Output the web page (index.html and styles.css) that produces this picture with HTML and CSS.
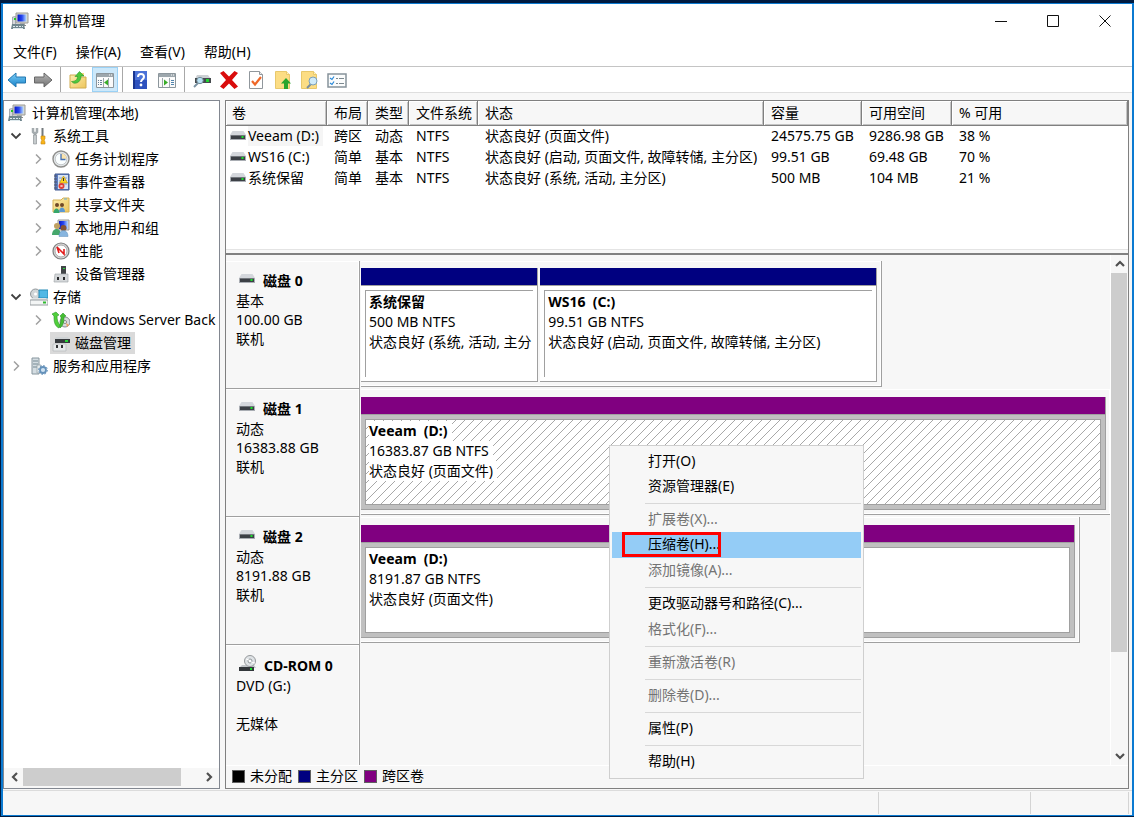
FILE: index.html
```html
<!DOCTYPE html>
<html lang="zh-CN">
<head>
<meta charset="utf-8">
<title>计算机管理</title>
<link rel="stylesheet" href="styles.css">
</head>
<body>
<svg class="defs" aria-hidden="true">
  <defs>
    <linearGradient id="gBlue" x1="0" y1="0" x2="0" y2="1"><stop offset="0" stop-color="#7fd0f8"/><stop offset="1" stop-color="#1480c8"/></linearGradient>
    <linearGradient id="gGray" x1="0" y1="0" x2="0" y2="1"><stop offset="0" stop-color="#b8b8b8"/><stop offset="1" stop-color="#707070"/></linearGradient>
    <linearGradient id="gFold" x1="0" y1="0" x2="1" y2="1"><stop offset="0" stop-color="#fdeeb0"/><stop offset="1" stop-color="#edc65c"/></linearGradient>
    <linearGradient id="gScreen" x1="0" y1="0" x2="1" y2="0"><stop offset="0" stop-color="#0818c8"/><stop offset=".5" stop-color="#2848f0"/><stop offset="1" stop-color="#b8dcff"/></linearGradient>
  </defs>
  <symbol id="computer" viewBox="0 0 18 18">
    <path d="M5 1h12v10H5z" fill="#d8d8cc" stroke="#9a9a98"/><path d="M6.500 2.500h9v7h-9z" fill="url(#gScreen)"/>
    <path d="M9 11h5v2H9z" fill="#aaa"/><path d="M7 13h8v1H7z" fill="#888"/>
    <path d="M1.500 5l3-.5v8h-3z" fill="#d4d8dc" stroke="#8a9096" stroke-width=".7"/><path d="M3 6h2v2H3z" fill="#28c428"/>
    <path d="M1 12h12l1 5H0z" fill="#6f868e"/><path d="M2 14h2v1H2zM5 14h2v1H5zM8 14h2v1H8zM11 14h1v1h-1zM2 16h10v1H2z" fill="#dfeaee"/>
  </symbol>
  <symbol id="disk" viewBox="0 0 16 10">
    <path d="M2.500 0h11L16 4H0z" fill="#d4d7dc"/><path d="M0 4h16v5H0z" fill="#a9adb3"/><path d="M1 4.500h14v3.500H1z" fill="#3c4046"/><path d="M11.500 5h2v2h-2z" fill="#19e02a"/>
  </symbol>
  <symbol id="cdrom" viewBox="0 0 17 17">
    <path d="M3 10h12l2 3H0z" fill="#c2c6ca"/><circle cx="11" cy="6" r="5.500" fill="#dfe3e6" stroke="#96999c"/><circle cx="11" cy="6" r="2" fill="#fff" stroke="#8e9498"/>
    <path d="M7 4l3 1M12 7l4 1" stroke="#fff"/><path d="M0 12h15v4H0z" fill="#33373b"/><path d="M11 13h2v2h-2z" fill="#20df30"/>
  </symbol>
  <symbol id="down" viewBox="0 0 12 12"><path d="M1.500 3.500L6 8l4.500-4.500" fill="none" stroke="#404040" stroke-width="1.800"/></symbol>
  <symbol id="right" viewBox="0 0 12 12"><path d="M4 1.500L8.500 6 4 10.500" fill="none" stroke="#a0a0a0" stroke-width="1.500"/></symbol>
  <symbol id="arrow" viewBox="0 0 12 12"><path d="M2 8l4-4 4 4" fill="none" stroke="#505050" stroke-width="2.200"/></symbol>
</svg>
<div class="window">
  <header class="titlebar">
    <svg class="icon"><use href="#computer"/></svg>
    <h1>计算机管理</h1>
    <div class="controls">
      <button aria-label="最小化"><svg class="ctl" viewBox="0 0 12 12"><path d="M0 6.500h12"/></svg></button>
      <button aria-label="最大化"><svg class="ctl" viewBox="0 0 12 12"><path d="M.5.5h11v11H.5z"/></svg></button>
      <button aria-label="关闭"><svg class="ctl" viewBox="0 0 12 12"><path d="M.5.5l11 11M11.500.5l-11 11"/></svg></button>
    </div>
  </header>
  <nav class="menubar">
    <button>文件(F)</button><button>操作(A)</button><button>查看(V)</button><button>帮助(H)</button>
  </nav>
  <div class="toolbar">
    <div class="group tight">
      <button aria-label="后退"><svg class="tool" viewBox="0 0 20 20"><path d="M1 10l8-7v4h9.500v6H9v4z" fill="url(#gBlue)" stroke="#2277b0"/></svg></button>
      <button aria-label="前进"><svg class="tool" viewBox="0 0 20 20"><path d="M19 10l-8-7v4H1.500v6H11v4z" fill="url(#gGray)" stroke="#666"/></svg></button>
    </div>
    <div class="group">
      <button aria-label="上一级"><svg class="tool" viewBox="0 0 20 20"><path d="M2 5h6l2 2h8v11H2z" fill="url(#gFold)" stroke="#d0ac50"/><path d="M12 3h4v3h-4z" fill="#f4d880"/><path d="M3.500 11.500c4 0 6-2 6-5H7l4.500-5L16 6h-3c0 5-3.500 8-7.500 7z" fill="#4ec83c" stroke="#28962a" stroke-width=".6"/></svg></button>
      <button class="on" aria-label="控制台树"><svg class="tool" viewBox="0 0 20 20"><path d="M1.500 3.500h17v14h-17z" fill="#fafafa" stroke="#8c969c"/><path d="M2 4h16v3H2z" fill="#9da7ad"/><path d="M14 5h1M16 5h1M2 8.500h16" stroke="#fff"/><path d="M8.500 8v9M13.500 8v9" stroke="#9da7ad"/><path d="M3 10.500h4M3 12.500h4M3 14.500h4" stroke="#668298" stroke-dasharray="1 1 2"/><path d="M13 9.500v6l-4-3z" fill="#38ac28"/></svg></button>
    </div>
    <div class="group">
      <button aria-label="帮助"><svg class="tool" viewBox="0 0 20 20"><path d="M3 1h14v18H3z" fill="#2e52be"/><path d="M3 1h2v18H3z" fill="#193590"/><path d="M5 1h12v9H5z" fill="#4b72d8"/><path d="M8 7c0-4 6-4 6 0 0 2-3 2.500-3 5" fill="none" stroke="#fff" stroke-width="2"/><circle cx="11" cy="15" r="1.400" fill="#fff"/></svg></button>
      <button aria-label="操作窗格"><svg class="tool" viewBox="0 0 20 20"><path d="M1.500 3.500h17v14h-17z" fill="#fafafa" stroke="#8c969c"/><path d="M2 4h16v3H2z" fill="#9da7ad"/><path d="M14 5h1M16 5h1M2 8.500h16" stroke="#fff"/><path d="M5.500 8v9M12.500 8v9" stroke="#9da7ad"/><path d="M14 10.500h3M14 12.500h3M14 14.500h3" stroke="#5285ad"/><path d="M7 9.500v6l4-3z" fill="#38ac28"/></svg></button>
    </div>
    <div class="group">
      <button aria-label="刷新磁盘"><svg class="tool" viewBox="0 0 20 20"><path d="M5 5h11l3 4H3z" fill="#ccd0d4"/><path d="M3 8h16v5H3z" fill="#454b4e"/><path d="M14 9h3v3h-3z" fill="#20d62e"/><path d="M2 17l5-5" stroke="#7c94a4" stroke-width="2"/><circle cx="8" cy="10.500" r="3.200" fill="#b9e2f5" stroke="#758c98"/></svg></button>
      <button aria-label="删除"><svg class="tool" viewBox="0 0 20 20"><path d="M1 3l3.500-2L10 6.500 15.500 1 19 3l-6 7 6 6.500-3.500 2.500L10 13.500 4.500 19 1 16.500 7 10z" fill="#d90c0c"/></svg></button>
      <button aria-label="属性"><svg class="tool" viewBox="0 0 20 20"><path d="M3.500 1.500h10l3 3v14h-13z" fill="#fff" stroke="#90979c"/><path d="M13.500 1.500v3h3" fill="#eee" stroke="#90979c"/><path d="M6 11l3 3.500L15 7" fill="none" stroke="#ef6829" stroke-width="2.200"/></svg></button>
      <button aria-label="新建"><svg class="tool" viewBox="0 0 20 20"><path d="M2.500 1.500h11l3 3v14h-14z" fill="#fcdd84" stroke="#e8c86c"/><path d="M13.500 1.500v3h3" fill="#fff3c2" stroke="#e8c86c"/><path d="M13 8l5 5.500h-3V19h-4v-5.500H8z" fill="#2aa52c"/></svg></button>
      <button aria-label="查找"><svg class="tool" viewBox="0 0 20 20"><path d="M1.500 1.500h12l3 3v14h-15z" fill="#fcdd84" stroke="#e8c86c"/><path d="M13.500 1.500v3h3" fill="#fff3c2" stroke="#e8c86c"/><path d="M7 18l4-4" stroke="#7a8c9c" stroke-width="2"/><circle cx="13" cy="11" r="4" fill="#cfeaf9" stroke="#7ca0b8"/></svg></button>
      <button aria-label="列表"><svg class="tool" viewBox="0 0 20 20"><path d="M1 4h18v13H1z" fill="#fbfcfc" stroke="#87929a" stroke-width="1.500"/><path d="M3 8l2 1.500L7 6.500M3 13l2 1.500L7 11.500" fill="none" stroke="#2486d8" stroke-width="1.200"/><path d="M9 8.500h2M12 8.500h5M9 13.500h2M12 13.500h5" stroke="#7c8990"/></svg></button>
    </div>
  </div>
  <main class="main">
    <aside class="side">
      <ul class="tree">
        <li class="row root"><svg class="icon"><use href="#computer"/></svg><span class="name">计算机管理(本地)</span></li>
        <li class="row"><button class="twist" aria-label="折叠"><svg class="chev"><use href="#down"/></svg></button>
          <svg class="icon" viewBox="0 0 18 18"><path d="M3 1v4l2 2 2-2V1M5 7v10" fill="none" stroke="#a4abae" stroke-width="2.500"/><path d="M3.500 8h3v9h-3z" fill="#c6cbcd" stroke="#888f92" stroke-width=".6"/><path d="M12.500 1v9" stroke="#73797c" stroke-width="2"/><path d="M11 9h4v3l-1 1 1 2v2h-4v-2l1-2-1-1z" fill="#f8b419" stroke="#c88610" stroke-width=".6"/></svg><span class="name">系统工具</span></li>
        <li class="row sub"><button class="twist" aria-label="展开"><svg class="chev"><use href="#right"/></svg></button>
          <svg class="icon" viewBox="0 0 18 18"><circle cx="9" cy="9" r="8" fill="#e6eaec" stroke="#8e8e8c" stroke-width="1.400"/><circle cx="9" cy="9" r="5.800" fill="#fafeff" stroke="#c4c8ca"/><path d="M9 9V3.500A5.500 5.500 0 0 1 14.500 9z" fill="#fae3ac"/><path d="M9 4v5.500h4.500" fill="none" stroke="#4570b4" stroke-width="1.300"/></svg><span class="name">任务计划程序</span></li>
        <li class="row sub"><button class="twist" aria-label="展开"><svg class="chev"><use href="#right"/></svg></button>
          <svg class="icon" viewBox="0 0 18 18"><path d="M3 1h14v16H3z" fill="#5d7ec2" stroke="#40588f"/><path d="M6 2h10v14H6z" fill="#d7e3f5"/><path d="M7 5h8M7 8h8M7 11h8" stroke="#91a4c4"/><path d="M2 3h3M2 6h3M2 9h3M2 12h3M2 15h3" stroke="#4f5568"/><path d="M11.500 3l4 7h-8z" fill="#ffd321" stroke="#bc930c" stroke-width=".6"/><path d="M11.500 5v3" stroke="#333"/><circle cx="9.500" cy="13" r="3" fill="#e24036"/><path d="M8.500 12l2 2m0-2l-2 2" stroke="#fff" stroke-width=".8"/></svg><span class="name">事件查看器</span></li>
        <li class="row sub"><button class="twist" aria-label="展开"><svg class="chev"><use href="#right"/></svg></button>
          <svg class="icon" viewBox="0 0 18 18"><path d="M1 4h8l2-2h6v14H1z" fill="url(#gFold)" stroke="#d6b256"/><path d="M12 3h3" stroke="#60acdb"/><circle cx="5" cy="9" r="2" fill="#714927"/><circle cx="10" cy="9" r="2" fill="#714927"/><path d="M1.500 17c0-6 6-6 6 0z" fill="#36a66c"/><path d="M7 16c0-6 6-6 6 0z" fill="#5b98d2"/></svg><span class="name">共享文件夹</span></li>
        <li class="row sub"><button class="twist" aria-label="展开"><svg class="chev"><use href="#right"/></svg></button>
          <svg class="icon" viewBox="0 0 18 18"><path d="M6 1h11v10H6z" fill="#d9dcd6" stroke="#999"/><path d="M7 2h9v8H7z" fill="url(#gScreen)"/><circle cx="5" cy="7" r="3" fill="#c0a061"/><path d="M0 16c0-8 9-8 9 0z" fill="#45a76c"/><circle cx="11.500" cy="9" r="3" fill="#855434"/><path d="M7 17.500c0-8 9-8 9 0z" fill="#87b5df" stroke="#6290bb" stroke-width=".5"/></svg><span class="name">本地用户和组</span></li>
        <li class="row sub"><button class="twist" aria-label="展开"><svg class="chev"><use href="#right"/></svg></button>
          <svg class="icon" viewBox="0 0 18 18"><circle cx="9" cy="9" r="8" fill="#d9d9d9" stroke="#7e7e7e" stroke-width="1.200"/><circle cx="9" cy="9" r="6" fill="#fff" stroke="#aaa"/><path d="M5 5l7 7V7M5 5l2 6" fill="none" stroke="#e21b1b" stroke-width="1.600"/></svg><span class="name">性能</span></li>
        <li class="row sub"><span class="twist"></span>
          <svg class="icon" viewBox="0 0 18 18"><path d="M9 1h5v9H9z" fill="#414447"/><path d="M11 3h2v1h-2z" fill="#2bd63a"/><path d="M3 9h13v8H2z" fill="#d5d8da" stroke="#a5a9ac" stroke-width=".7"/><path d="M5 12h2v3H5zM11 12h2v3h-2z" fill="#292b2d"/></svg><span class="name">设备管理器</span></li>
        <li class="row"><button class="twist" aria-label="折叠"><svg class="chev"><use href="#down"/></svg></button>
          <svg class="icon" viewBox="0 0 18 18"><circle cx="5.500" cy="6" r="5" fill="#d1d6d8" stroke="#91979a"/><circle cx="5.500" cy="6" r="1.500" fill="#fff"/><path d="M9 2h9v8H9z" fill="#51b8e5" stroke="#248bb7"/><path d="M2 10h14l2 3H0z" fill="#dfe3e5"/><path d="M0 12h18v5H0z" fill="#f3f5f5" stroke="#989ea1"/><path d="M13 13.500h3v2h-3z" fill="#30ba31"/></svg><span class="name">存储</span></li>
        <li class="row sub"><button class="twist" aria-label="展开"><svg class="chev"><use href="#right"/></svg></button>
          <svg class="icon" viewBox="0 0 18 18"><circle cx="13" cy="11" r="5" fill="#d9dadd" stroke="#898c90"/><circle cx="13" cy="11" r="1.500" fill="#fff" stroke="#888"/><path d="M14 12l3 2-2 2z" fill="#f1a05b"/><path d="M0 3l4-2 3 3-2 1c0 4 1 7 3 9l-1 3C2 15 2 9 2 5z" fill="#51cf3b" stroke="#2b962b" stroke-width=".6"/><path d="M8 5l3-3 3 3-2 1c0 5-1 9-4 11-1-2 1-4 1-11z" fill="#45bd32" stroke="#2b962b" stroke-width=".6"/></svg><span class="name">Windows Server Back</span></li>
        <li class="row sub"><span class="twist"></span><span class="picked">
          <svg class="icon" viewBox="0 0 18 18"><path d="M4 3h12l2 2H2z" fill="#cfd3d5"/><path d="M3 5h15v4H3z" fill="#363a3d"/><path d="M13 6h3v2h-3z" fill="#29d338"/><path d="M1 10h13v7H1z" fill="#e6e8e9" stroke="#b0b4b7" stroke-width=".6"/><path d="M4 11h2v3H4zM9 11h2v3H9z" fill="#303234"/></svg><span class="name">磁盘管理</span></span></li>
        <li class="row"><button class="twist" aria-label="展开"><svg class="chev"><use href="#right"/></svg></button>
          <svg class="icon" viewBox="0 0 18 18"><path d="M2 1h7v16H2z" fill="#d4dde2" stroke="#87969e"/><path d="M3 4h5M3 7h5M3 10h5" stroke="#758993"/><path d="M7 8h4v8H7z" fill="#e4eaec" stroke="#97a1a7" stroke-width=".7"/><circle cx="13" cy="13" r="3" fill="#cfe2f2" stroke="#6491ba" stroke-width="1.800"/><circle cx="13" cy="13" r="4.400" fill="none" stroke="#6491ba" stroke-dasharray="1.700 1.700"/></svg><span class="name">服务和应用程序</span></li>
      </ul>
      <div class="hscroll">
        <button aria-label="向左"><svg class="chev left"><use href="#arrow"/></svg></button>
        <div class="track"><div class="thumb"></div></div>
        <button aria-label="向右"><svg class="chev toright"><use href="#arrow"/></svg></button>
      </div>
    </aside>
    <section class="content">
      <div class="volumes">
        <table>
          <colgroup><col class="c-name"><col class="c-kind"><col class="c-kind"><col class="c-fs"><col class="c-state"><col class="c-cap"><col class="c-free"><col></colgroup>
          <thead><tr><th>卷</th><th>布局</th><th>类型</th><th>文件系统</th><th>状态</th><th>容量</th><th>可用空间</th><th>% 可用</th></tr></thead>
          <tbody>
            <tr><td><svg class="drive"><use href="#disk"/></svg><span class="focus">Veeam (D:)</span></td><td>跨区</td><td>动态</td><td>NTFS</td><td>状态良好 (页面文件)</td><td>24575.75 GB</td><td>9286.98 GB</td><td>38 %</td></tr>
            <tr><td><svg class="drive"><use href="#disk"/></svg><span>WS16 (C:)</span></td><td>简单</td><td>基本</td><td>NTFS</td><td>状态良好 (启动, 页面文件, 故障转储, 主分区)</td><td>99.51 GB</td><td>69.48 GB</td><td>70 %</td></tr>
            <tr><td><svg class="drive"><use href="#disk"/></svg><span>系统保留</span></td><td>简单</td><td>基本</td><td>NTFS</td><td>状态良好 (系统, 活动, 主分区)</td><td>500 MB</td><td>104 MB</td><td>21 %</td></tr>
          </tbody>
        </table>
      </div>
      <div class="splitter"></div>
      <div class="lower">
        <div class="disks">
          <article class="disk">
            <div class="label"><h2><svg class="drive"><use href="#disk"/></svg>磁盘 0</h2><p>基本</p><p>100.00 GB</p><p>联机</p></div>
            <div class="lane"><div class="graph" style="width:69.5%">
              <div class="vol primary" style="width:34.5%"><div class="bar"></div><div class="box"><div class="info"><h3>系统保留</h3><p>500 MB NTFS</p><p>状态良好 (系统, 活动, 主分</p></div></div></div>
              <div class="vol primary" style="width:65.5%"><div class="bar"></div><div class="box"><div class="info"><h3>WS16&nbsp; (C:)</h3><p>99.51 GB NTFS</p><p>状态良好 (启动, 页面文件, 故障转储, 主分区)</p></div></div></div>
            </div></div>
          </article>
          <article class="disk">
            <div class="label"><h2><svg class="drive"><use href="#disk"/></svg>磁盘 1</h2><p>动态</p><p>16383.88 GB</p><p>联机</p></div>
            <div class="lane"><div class="graph dynamic full" style="width:100%">
              <div class="vol spanned" style="width:100%"><div class="bar"></div><div class="box"><div class="info hatch"><h3>Veeam&nbsp; (D:)</h3><p>16383.87 GB NTFS</p><p>状态良好 (页面文件)</p></div></div></div>
            </div></div>
          </article>
          <article class="disk">
            <div class="label"><h2><svg class="drive"><use href="#disk"/></svg>磁盘 2</h2><p>动态</p><p>8191.88 GB</p><p>联机</p></div>
            <div class="lane"><div class="graph dynamic" style="width:96%">
              <div class="vol spanned" style="width:100%"><div class="bar"></div><div class="box"><div class="info"><h3>Veeam&nbsp; (D:)</h3><p>8191.87 GB NTFS</p><p>状态良好 (页面文件)</p></div></div></div>
            </div></div>
          </article>
          <article class="disk last">
            <div class="label"><h2><svg class="drive cd"><use href="#cdrom"/></svg>CD-ROM 0</h2><p>DVD (G:)</p><p>&nbsp;</p><p>无媒体</p></div>
            <div class="lane"></div>
          </article>
        </div>
        <div class="vscroll">
          <button aria-label="向上"><svg class="chev"><use href="#arrow"/></svg></button>
          <div class="track"><div class="thumb"></div></div>
          <button aria-label="向下"><svg class="chev flip"><use href="#arrow"/></svg></button>
        </div>
      </div>
      <div class="legend"><span><i class="sw none"></i>未分配</span><span><i class="sw prim"></i>主分区</span><span><i class="sw span"></i>跨区卷</span></div>
    </section>
  </main>
  <footer class="status"><span class="wide"></span><span class="mid"></span><span class="end"></span></footer>
  <div class="context" role="menu">
    <button role="menuitem">打开(O)</button>
    <button role="menuitem">资源管理器(E)</button>
    <hr>
    <button role="menuitem" disabled>扩展卷(X)...</button>
    <button role="menuitem" class="hot tall">压缩卷(H)...</button>
    <button role="menuitem" disabled>添加镜像(A)...</button>
    <hr>
    <button role="menuitem" class="tall">更改驱动器号和路径(C)...</button>
    <button role="menuitem" disabled>格式化(F)...</button>
    <hr>
    <button role="menuitem" disabled>重新激活卷(R)</button>
    <hr>
    <button role="menuitem" disabled>删除卷(D)...</button>
    <hr>
    <button role="menuitem">属性(P)</button>
    <hr>
    <button role="menuitem">帮助(H)</button>
  </div>
</div>
</body>
</html>
```

FILE: styles.css
```css
*, *::after { box-sizing: border-box; }
body {
  margin: 0;
  min-height: 100vh;
  padding: 3px 0 1px 1px;
  display: flex;
  background: #001b40;
  color: #000;
  font: 14px/20px "Noto Sans", "Noto Sans CJK SC", sans-serif;
}
button { font: inherit; color: inherit; background: none; border: 0; padding: 0; margin: 0; }
h1, h2, h3, p, ul { margin: 0; padding: 0; font-size: 14px; font-weight: 400; list-style: none; }
svg { display: block; flex: none; }
.defs { position: absolute; width: 0; height: 0; }

.window {
  position: relative;
  flex: 1;
  min-width: 0;
  display: flex;
  flex-direction: column;
  background: #f7f7f7;
  border: solid #0b7ad1;
  border-width: 1px 2px;
}
.icon { width: 18px; height: 18px; }

.titlebar { display: flex; align-items: center; height: 34px; padding: 0 1px 0 8px; gap: 6px; background: #fff; }
.controls { display: flex; margin-left: auto; }
.controls button { width: 52px; height: 34px; display: grid; place-items: center; }
.ctl { width: 12px; height: 12px; fill: none; stroke: #111; }

.menubar { display: flex; gap: 1px; height: 28px; padding-left: 1px; background: #fff; }
.menubar button { padding: 0 9px; }

.toolbar { display: flex; height: 27px; background: #fff; border-top: 1px solid #c4c4c4; border-bottom: 1px solid #dedede; }
.group { display: flex; gap: 1px; padding: 0 4px; align-items: center; }
.group + .group { border-left: 1px solid #a8a8a8; }
.group.tight { gap: 0; padding: 0 4px 0 1px; }
.group button { width: 26px; height: 25px; display: grid; place-items: center; }
.group .on { background: #cce8fa; border: 1px solid #9ad1f5; }
.tool { width: 20px; height: 20px; }

.main { flex: 1; display: flex; gap: 5px; padding: 7px 3px 1px 0; min-height: 0; }

.side { width: 217px; flex: none; display: flex; flex-direction: column; background: #fff; border: 1px solid #828790; }
.tree { flex: 1; }
.row { display: flex; align-items: center; height: 23px; padding-left: 1px; white-space: nowrap; overflow: hidden; }
.row.root { padding-left: 4px; }
.row.sub { padding-left: 23px; }
.row .icon { margin-right: 5px; }
.row.root .icon { margin-right: 6px; }
.twist { width: 22px; height: 22px; margin-right: 3px; display: grid; place-items: center; flex: none; }
.chev { width: 12px; height: 12px; }
.picked { display: flex; align-items: center; height: 22px; margin-left: -2px; padding: 0 4px 0 2px; background: #dadada; }
.hscroll { display: flex; height: 20px; padding: 0 2px; padding-bottom: 2px; background: #f7f7f7; }
.hscroll button, .vscroll button { width: 17px; height: 18px; display: grid; place-items: center; flex: none; }
.hscroll .track { flex: 1; }
.hscroll .thumb { width: 89%; height: 100%; background: #cdcdcd; }
.left { transform: rotate(-90deg); }
.toright { transform: rotate(90deg); }
.flip { transform: rotate(180deg); }

.content { flex: 1; min-width: 0; display: flex; flex-direction: column; border: 1px solid #808080; }
.volumes { min-height: 148px; background: #fff; }
table { width: 100%; table-layout: fixed; border-collapse: separate; border-spacing: 0; }
.c-name { width: 101px; }
.c-kind { width: 41px; }
.c-fs { width: 69px; }
.c-state { width: 286px; }
.c-cap { width: 98px; }
.c-free { width: 90px; }
th {
  height: 25px;
  padding: 0 0 0 7px;
  text-align: left;
  font-weight: 400;
  background: #f7f7f7;
  border-right: 1px solid #808080;
  border-bottom: 1px solid #808080;
  box-shadow: inset 1px 1px #fff, inset -1px -1px #c4c4c4;
}
th:first-child { padding-left: 6px; }
td { height: 21px; padding: 0 0 1px 7px; white-space: nowrap; }
td:first-child { display: flex; align-items: center; gap: 2px; padding-left: 4px; }
.drive { width: 16px; height: 10px; }
.focus { background: #f5f5f5; padding-right: 4px; }
.splitter { height: 6px; background: #f7f7f7; border-top: 1px solid #e4e4e4; border-bottom: 2px solid #808080; }

.lower { flex: 1; display: flex; min-height: 0; }
.disks { flex: 1; min-width: 0; display: flex; flex-direction: column; padding-top: 6px; }
.disk { display: flex; height: 128px; }
.disk.last { flex: 1; height: auto; }
.label { width: 134px; flex: none; padding: 10px 0 0 10px; border-right: 1px solid #a0a0a0; border-bottom: 1px solid #a0a0a0; box-shadow: inset -1px 0 #fff, inset 0 1px #fff; line-height: 19px; }
.last .label { border-bottom: 0; }
.label h2 { display: flex; align-items: center; gap: 8px; padding-left: 3px; font-weight: 700; line-height: 20px; }
.label .drive { margin-bottom: 4px; }
.label .drive.cd { width: 17px; height: 17px; }
.lane { flex: 1; min-width: 0; padding-left: 1px; }
.graph { display: flex; height: 126px; padding: 7px 4px 4px 0; border-right: 1px solid #a0a0a0; border-bottom: 1px solid #a0a0a0; box-shadow: inset 0 1px #fff, inset -1px -1px #fff; }
.graph.dynamic { padding-top: 8px; }
.graph.full { border-right: 0; }
.vol { display: flex; flex-direction: column; min-width: 0; border-right: 1px solid #a0a0a0; }
.vol + .vol { margin-left: 2px; }
.bar { height: 18px; border-bottom: 1px solid #a0a0a0; }
.primary .bar { background: #000080; }
.spanned .bar { background: #800080; }
.box { flex: 1; display: flex; min-height: 0; padding: 4px; background: #fff; border-bottom: 1px solid #a0a0a0; }
.spanned .box { background: #c0c0c0; }
.info { flex: 1; min-width: 0; padding: 1px 0 0 3px; background: #fff; border-top: 1px solid #a0a0a0; border-left: 1px solid #a0a0a0; white-space: nowrap; overflow: hidden; }
.spanned .info { border: 1px solid #a0a0a0; }
.info h3 { font-weight: 700; }
.info h3, .info p { width: fit-content; padding-right: 4px; background: #fff; }
.info.hatch {
  background: #fff linear-gradient(135deg, #a8a8a8 0 4%, #fff 4% 46%, #a8a8a8 46% 54%, #fff 54% 96%, #a8a8a8 96%) 0 0 / 9px 9px;
}

.vscroll { width: 18px; display: flex; flex-direction: column; padding-right: 1px; border-left: 1px solid #fff; }
.vscroll .track { flex: 1; }
.vscroll .thumb { height: 80%; background: #cdcdcd; }

.legend { display: flex; align-items: center; gap: 6px; height: 23px; padding: 0 6px 2px; border-top: 1px solid #fff; }
.legend span { display: flex; align-items: center; gap: 5px; }
.sw { width: 13px; height: 13px; border: 1px solid #606060; }
.none { background: #000; }
.prim { background: #000080; }
.span { background: #800080; }

.status { display: flex; height: 25px; padding: 1px 3px 1px 0; border-top: 1px solid #dcdcdc; }
.status span { border-right: 1px solid #d4d4d4; }
.wide { flex: 1; }
.mid { width: 152px; }
.end { width: 98px; }

.context { position: absolute; left: 606px; top: 441px; width: 255px; padding: 3px 2px 4px; background: #f7f7f7; border: 1px solid #cfcfcf; }
.context button { position: relative; display: block; width: 100%; height: 25px; padding: 0 0 2px 36px; text-align: left; white-space: nowrap; }
.context .tall { height: 26px; }
.context button:disabled { color: #747474; }
.context hr { height: 1px; margin: 4px 0 3px 33px; border: 0; background: #d8d8d8; }
.context .hot { background: #94ccf6; }
.hot::after { content: ""; position: absolute; left: 10px; top: 0; width: 99px; height: 25px; border: 3px solid #f00; }
```
